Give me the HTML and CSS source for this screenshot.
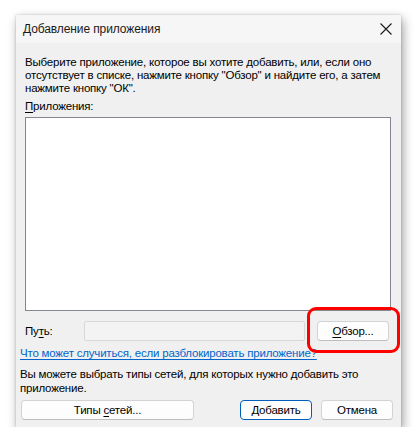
FILE: index.html
```html
<!DOCTYPE html>
<html lang="ru">
<head>
<meta charset="utf-8">
<title>Добавление приложения</title>
<link rel="stylesheet" href="styles.css">
</head>
<body>
<div class="stage">
  <div class="dialog">
    <div class="titlebar">
      <span class="title">Добавление приложения</span>
      <svg class="close" width="12" height="12" viewBox="0 0 12 12"><path d="M0.5 0.5 L11.5 11.5 M11.5 0.5 L0.5 11.5" stroke="#1a1a1a" stroke-width="1.1" fill="none"/></svg>
    </div>
    <div class="content">
      <p class="intro">Выберите приложение, которое вы хотите добавить, или, если оно отсутствует в списке, нажмите кнопку "Обзор" и найдите его, а затем нажмите кнопку "ОК".</p>
      <div class="label"><u>П</u>риложения:</div>
      <div class="listbox"></div>
      <div class="pathrow">
        <span class="pathlabel">Пу<u>т</u>ь:</span>
        <div class="pathinput"></div>
        <button class="btn browse"><u>О</u>бзор...</button>
      </div>
      <a class="link" href="#">Что может случиться, если разблокировать приложение?</a>
      <p class="note">Вы можете выбрать типы сетей, для которых нужно добавить это приложение.</p>
      <div class="buttons">
        <button class="btn types">Типы <u>с</u>етей...</button>
        <div class="spacer"></div>
        <button class="btn primary">Добавить</button>
        <button class="btn cancel">Отмена</button>
      </div>
    </div>
    <div class="highlight"></div>
  </div>
</div>
</body>
</html>
```
FILE: styles.css
```css
html, body {
  margin: 0;
  padding: 0;
  background: #ffffff;
}
body {
  font-family: "Liberation Sans", Arial, sans-serif;
  font-size: 11.5px;
  letter-spacing: -0.2px;
  color: #000;
}
.stage {
  padding: 15px 0 0 16px;
}
.dialog {
  position: relative;
  width: 385px;
  height: 412px;
  background: #f0f0f0;
  box-shadow: 2px 4px 10px rgba(0,0,0,0.38), 0 0 2px rgba(0,0,0,0.2);
  display: flex;
  flex-direction: column;
}
.titlebar {
  height: 28px;
  background: #f6f6f6;
  display: flex;
  align-items: center;
  justify-content: space-between;
  padding: 0 9px 0 7px;
}
.title {
  font-size: 12px;
  letter-spacing: -0.1px;
  color: #1a1a1a;
}
.close {
  display: block;
}
.content {
  padding: 13px 10px 0 9px;
  display: flex;
  flex-direction: column;
}
.intro {
  margin: 0;
  line-height: 13px;
}
.label {
  margin-top: 5px;
  line-height: 13px;
}
.label u, .pathlabel u, .btn u {
  text-decoration-thickness: 1px;
  text-underline-offset: 2px;
}
.listbox {
  margin-top: 4px;
  height: 192px;
  background: #fff;
  border: 1px solid #828790;
}
.pathrow {
  margin-top: 10px;
  display: flex;
  align-items: center;
  height: 20px;
}
.pathlabel {
  width: 59px;
}
.pathinput {
  width: 219px;
  height: 18px;
  background: #f3f3f3;
  border: 1px solid #d8d8d8;
  border-radius: 2px;
}
.btn {
  font-family: inherit;
  font-size: 11.5px;
  letter-spacing: -0.2px;
  color: #000;
  background: #fdfdfd;
  border: 1px solid #d3d3d3;
  border-bottom-color: #bdbdbd;
  border-radius: 4px;
  height: 20px;
  padding: 0;
  line-height: 18px;
}
.browse {
  margin-left: 12px;
  width: 72px;
}
.link {
  margin-top: 6px;
  margin-left: -5px;
  color: #0066cc;
  line-height: 13px;
  text-decoration-thickness: 1px;
  text-underline-offset: 2px;
  white-space: nowrap;
}
.note {
  margin: 7px 0 0 -5px;
  line-height: 14px;
}
.buttons {
  margin-top: 5px;
  margin-left: -4px;
  display: flex;
  height: 20px;
}
.types {
  width: 173px;
}
.spacer {
  flex: 1;
}
.primary {
  width: 72px;
  border: 1px solid #005fb8;
}
.cancel {
  width: 72px;
  margin-left: 9px;
  margin-right: -2px;
}
.highlight {
  position: absolute;
  left: 291px;
  top: 292px;
  width: 87px;
  height: 40px;
  border: 3px solid #ff0000;
  border-radius: 9px;
}
```
